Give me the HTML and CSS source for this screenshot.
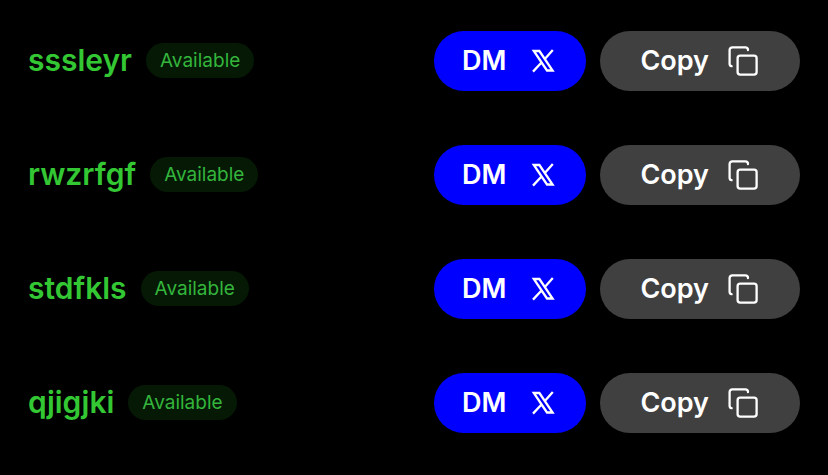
FILE: index.html
```html
<!DOCTYPE html>
<html lang="en">
<head>
<meta charset="utf-8">
<meta name="viewport" content="width=device-width, initial-scale=1">
<title>Usernames</title>
<link rel="stylesheet" href="styles.css">
</head>
<body>
<svg class="sprite" aria-hidden="true">
  <symbol id="x-logo" viewBox="0 0 24 24">
    <path fill="none" stroke="currentColor" stroke-width="2.300" d="M2.800 2H8.400L21.600 21.500H16zM21.800 1L13.400 10.500M11 13L2 22.600"/>
  </symbol>
  <symbol id="copy-icon" viewBox="0 0 32 32">
    <g fill="none" stroke="currentColor" stroke-width="2.300" stroke-linecap="round" stroke-linejoin="round">
      <rect x="10.600" y="10.600" width="19" height="19" rx="2.600"/>
      <path d="M4.600 21.200a2.500 2.500 0 0 1-2-2.500V5a2.700 2.700 0 0 1 2.700-2.700H18.500a2.500 2.500 0 0 1 2.500 2.700"/>
    </g>
  </symbol>
</svg>
<ul class="list">
  <li class="row">
    <div class="user"><span class="name">sssleyr</span><span class="badge">Available</span></div>
    <div class="actions">
      <button class="button dm" type="button">DM<svg class="logo" aria-hidden="true"><use href="#x-logo"/></svg></button>
      <button class="button copy" type="button">Copy<svg class="icon" aria-hidden="true"><use href="#copy-icon"/></svg></button>
    </div>
  </li>
  <li class="row">
    <div class="user"><span class="name">rwzrfgf</span><span class="badge">Available</span></div>
    <div class="actions">
      <button class="button dm" type="button">DM<svg class="logo" aria-hidden="true"><use href="#x-logo"/></svg></button>
      <button class="button copy" type="button">Copy<svg class="icon" aria-hidden="true"><use href="#copy-icon"/></svg></button>
    </div>
  </li>
  <li class="row">
    <div class="user"><span class="name">stdfkls</span><span class="badge">Available</span></div>
    <div class="actions">
      <button class="button dm" type="button">DM<svg class="logo" aria-hidden="true"><use href="#x-logo"/></svg></button>
      <button class="button copy" type="button">Copy<svg class="icon" aria-hidden="true"><use href="#copy-icon"/></svg></button>
    </div>
  </li>
  <li class="row">
    <div class="user"><span class="name">qjigjki</span><span class="badge">Available</span></div>
    <div class="actions">
      <button class="button dm" type="button">DM<svg class="logo" aria-hidden="true"><use href="#x-logo"/></svg></button>
      <button class="button copy" type="button">Copy<svg class="icon" aria-hidden="true"><use href="#copy-icon"/></svg></button>
    </div>
  </li>
</ul>
</body>
</html>
```

FILE: styles.css
```css
* {
  box-sizing: border-box;
}

body {
  margin: 0;
  background: #000;
  font-family: Inter, "Liberation Sans", sans-serif;
}

.sprite {
  display: none;
}

.list {
  display: grid;
  gap: 54px;
  margin: 0;
  padding: 31px 28px;
  list-style: none;
}

.row,
.user,
.actions {
  display: flex;
  align-items: center;
}

.row {
  justify-content: space-between;
}

.user,
.actions {
  gap: 14px;
}

.user {
  padding-bottom: 2px;
}

.name {
  color: #34c734;
  font-size: 30px;
  font-weight: 600;
  line-height: 36px;
}

.badge {
  padding: 0 14px;
  border-radius: 18px;
  background: #051905;
  color: #34b53c;
  font-size: 19px;
  line-height: 35px;
}

.button {
  display: flex;
  align-items: center;
  height: 60px;
  border: 0;
  border-radius: 30px;
  color: #fff;
  font-family: inherit;
  font-size: 27px;
  font-weight: 600;
  line-height: 32px;
  cursor: pointer;
}

.dm {
  gap: 25px;
  padding: 0 31px 0 28px;
  background: #00f;
}

.copy {
  gap: 18px;
  padding: 0 41px 0 40px;
  background: #404040;
}

.logo {
  width: 24px;
  height: 24px;
}

.icon {
  width: 32px;
  height: 32px;
}
```
